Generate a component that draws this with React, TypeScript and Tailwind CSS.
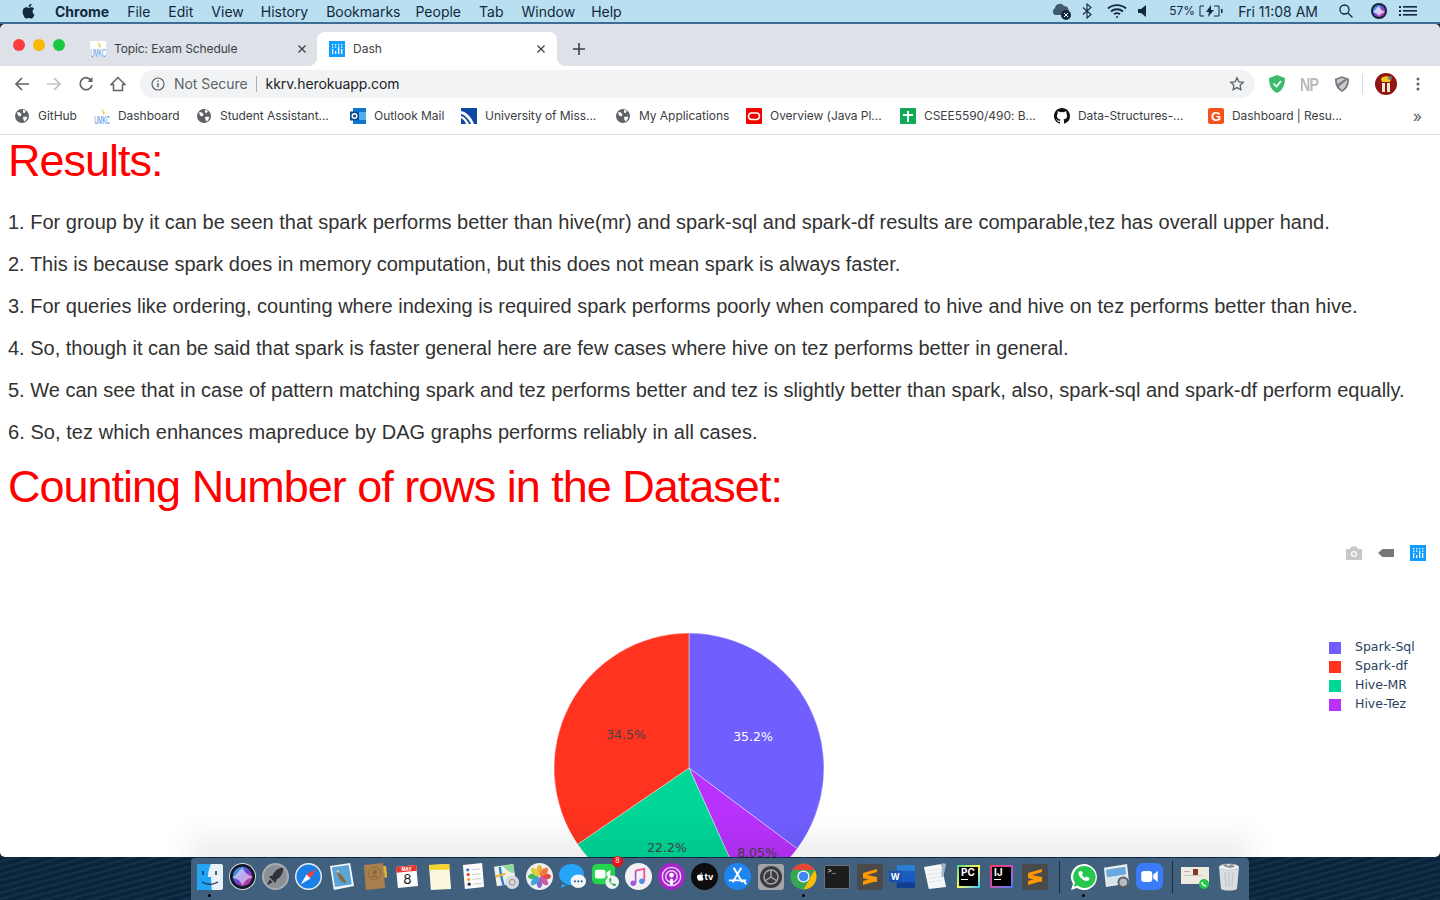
import React from "react";

const sf = "font-['Inter','Liberation_Sans',sans-serif]";

const menuItems = [
  { label: "File", left: "ml-[18px]" },
  { label: "Edit", left: "ml-[18px]" },
  { label: "View", left: "ml-[18px]" },
  { label: "History", left: "ml-[17px]" },
  { label: "Bookmarks", left: "ml-[18px]" },
  { label: "People", left: "ml-[15px]" },
  { label: "Tab", left: "ml-[18px]" },
  { label: "Window", left: "ml-[18px]" },
  { label: "Help", left: "ml-[16px]" },
];

const results = [
  { text: "1. For group by it can be seen that spark performs better than hive(mr) and spark-sql and spark-df results are comparable,tez has overall upper hand.", extra: "" },
  { text: "2. This is because spark does in memory computation, but this does not mean spark is always faster.", extra: "" },
  { text: "3. For queries like ordering, counting where indexing is required spark performs poorly when compared to hive and hive on tez performs better than hive.", extra: "" },
  { text: "4. So, though it can be said that spark is faster general here are few cases where hive on tez performs better in general.", extra: "" },
  { text: "5. We can see that in case of pattern matching spark and tez performs better and tez is slightly better than spark, also, spark-sql and spark-df perform equally.", extra: "" },
  { text: "6. So, tez which enhances mapreduce by DAG graphs performs reliably in all cases.", extra: "tracking-[0.06px]" },
];

const legend = [
  { label: "Spark-Sql", color: "bg-[#715eff]" },
  { label: "Spark-df", color: "bg-[#ff3320]" },
  { label: "Hive-MR", color: "bg-[#00d696]" },
  { label: "Hive-Tez", color: "bg-[#b832fb]" },
];

function Globe() {
  return (
    <svg viewBox="0 0 16 16" className="h-4 w-4 shrink-0">
      <circle cx="8" cy="8" r="7" fill="#5f6368" />
      <path d="M3 4l3 .5 1.500 2-1 2L4 7.500zM9 1.800l3 1-1.500 2.500L9 4.500zM9 9l3.500-.5.8 1.500L11 13.500 9.500 12z" fill="#fff" />
    </svg>
  );
}

function Umkc() {
  return (
    <svg viewBox="0 0 16 16" className="h-4 w-4 shrink-0">
      <rect width="16" height="16" fill="#fff" />
      <path d="M7.500 0l3.500 5.500-1.800 1z" fill="#f2c81e" />
      <text x="0" y="0" transform="translate(0.200 15.800) scale(0.67 1.450)" fontSize="8" fill="#3f8ade" fontFamily="'Liberation Sans', sans-serif">UMKC</text>
    </svg>
  );
}

function Github({ className = "h-4 w-4" }: { className?: string }) {
  return (
    <svg viewBox="0 0 16 16" className={`${className} shrink-0`} fill="#111">
      <path d="M8 0C3.580 0 0 3.580 0 8c0 3.540 2.290 6.530 5.470 7.590.4.070.55-.17.55-.38v-1.340c-2.230.49-2.700-1.070-2.700-1.070-.36-.93-.89-1.170-.89-1.170-.73-.5.050-.49.05-.49.8.060 1.230.83 1.230.83.710 1.220 1.870.87 2.330.66.070-.52.28-.87.510-1.070-1.780-.2-3.640-.89-3.640-3.950 0-.87.310-1.590.820-2.150-.08-.2-.36-1.020.08-2.120 0 0 .67-.21 2.200.82a7.600 7.600 0 0 1 4 0c1.530-1.040 2.200-.82 2.200-.82.44 1.100.16 1.920.08 2.120.51.560.82 1.270.82 2.150 0 3.070-1.870 3.750-3.650 3.950.29.250.54.730.54 1.480v2.200c0 .210.15.460.55.380A8.010 8.010 0 0 0 16 8c0-4.420-3.580-8-8-8z" />
    </svg>
  );
}

function Outlook() {
  return (
    <svg viewBox="0 0 16 16" className="h-4 w-4 shrink-0">
      <rect x="3" y="0" width="13" height="16" fill="#0f78d4" />
      <rect x="9" y="4" width="7" height="8" fill="#50b0ee" />
      <rect x="0" y="3.500" width="9" height="9" fill="#0a4f94" />
      <circle cx="4.500" cy="8" r="2.300" fill="none" stroke="#fff" strokeWidth="1.400" />
    </svg>
  );
}

function Mizzou() {
  return (
    <svg viewBox="0 0 16 16" className="h-4 w-4 shrink-0">
      <rect width="16" height="16" fill="#0d47a1" />
      <path d="M0 3c5 1 10 5 13 13h-3C8 11 4 7 0 6zM0 8c4 1 6 4 8 8H5C4 13 2 11 0 10z" fill="#fff" />
    </svg>
  );
}

function Oracle() {
  return (
    <svg viewBox="0 0 16 16" className="h-4 w-4 shrink-0">
      <rect width="16" height="16" rx="1" fill="#f80000" />
      <rect x="2.500" y="5" width="11" height="6.500" rx="3.200" fill="none" stroke="#fff" strokeWidth="1.500" />
    </svg>
  );
}

function Blackboard() {
  return (
    <svg viewBox="0 0 16 16" className="h-4 w-4 shrink-0">
      <rect width="16" height="16" rx="1" fill="#0fa958" />
      <path d="M7 3h2v3h4v2H9v6H7V8H3V6h4z" fill="#fff" />
    </svg>
  );
}

function Resume() {
  return (
    <svg viewBox="0 0 16 16" className="h-4 w-4 shrink-0">
      <rect width="16" height="16" rx="2" fill="#f4511e" />
      <text x="8" y="13" textAnchor="middle" fontSize="13" fontWeight="700" fill="#fff" fontFamily="'Liberation Sans', sans-serif">G</text>
    </svg>
  );
}

function PlotlyMark() {
  return (
    <svg viewBox="0 0 16 16" className="h-4 w-4 shrink-0">
      <rect width="16" height="16" fill="#119dff" />
      <g fill="#fff">
        <rect x="3" y="8" width="1.300" height="5" />
        <rect x="6" y="10" width="1.300" height="3" />
        <rect x="9" y="7" width="1.300" height="6" />
        <rect x="12" y="8" width="1.300" height="5" />
        <rect x="3" y="3" width="1.300" height="1.300" />
        <rect x="6" y="3" width="1.300" height="1.300" />
        <rect x="9" y="3" width="1.300" height="1.300" />
        <rect x="12" y="3" width="1.300" height="1.300" />
        <rect x="3" y="5.500" width="1.300" height="1.300" />
        <rect x="6" y="5.500" width="1.300" height="1.300" />
        <rect x="9" y="5.500" width="1.300" height="1.300" />
        <rect x="12" y="5.500" width="1.300" height="1.300" />
      </g>
    </svg>
  );
}

const bookmarks = [
  { icon: <Globe />, label: "GitHub", w: "w-[80px]" },
  { icon: <Umkc />, label: "Dashboard", w: "w-[102px]" },
  { icon: <Globe />, label: "Student Assistant...", w: "w-[154px]" },
  { icon: <Outlook />, label: "Outlook Mail", w: "w-[111px]" },
  { icon: <Mizzou />, label: "University of Miss...", w: "w-[154px]" },
  { icon: <Globe />, label: "My Applications", w: "w-[131px]" },
  { icon: <Oracle />, label: "Overview (Java Pl...", w: "w-[154px]" },
  { icon: <Blackboard />, label: "CSEE5590/490: B...", w: "w-[154px]" },
  { icon: <Github />, label: "Data-Structures-...", w: "w-[154px]" },
  { icon: <Resume />, label: "Dashboard | Resu...", w: "w-[154px]" },
];

function MenuBar() {
  return (
    <div className={`${sf} flex h-[22px] items-center bg-[#b9dff1] pl-[21px] pr-[23px] text-[14px] text-[#12293c]`}>
      <svg viewBox="0 0 14 16" className="h-4 w-[14px]" fill="#12293c">
        <path d="M11.600 8.500c0-1.800 1.500-2.700 1.600-2.700-.9-1.300-2.200-1.500-2.700-1.500-1.100-.1-2.200.7-2.800.7s-1.500-.7-2.400-.7c-1.300 0-2.400.7-3.100 1.900-1.300 2.300-.3 5.600 1 7.500.6.900 1.400 1.900 2.300 1.800.9 0 1.300-.6 2.400-.6s1.400.6 2.400.6 1.600-.9 2.200-1.800c.7-1 1-2 1-2.100-.1 0-1.900-.7-1.900-3.100zM9.800 3c.5-.6.800-1.400.7-2.300-.7 0-1.600.5-2.100 1.100-.5.500-.9 1.400-.8 2.200.8.100 1.700-.4 2.200-1z" />
      </svg>
      <span className="ml-[20px] font-bold">Chrome</span>
      {menuItems.map((m) => (
        <span key={m.label} className={m.left}>{m.label}</span>
      ))}
      <div className="ml-auto flex items-center">
        <svg viewBox="0 0 22 18" className="h-[18px] w-[22px]">
          <path d="M4 13a4 4 0 0 1 0-7 5 5 0 0 1 9-2 4 4 0 0 1 4 6v3z" fill="#40596b" />
          <circle cx="15" cy="13" r="5" fill="#12293c" />
          <path d="M13 11l4 4m0-4l-4 4" stroke="#fff" strokeWidth="1" />
        </svg>
        <svg viewBox="0 0 10 16" className="ml-[9px] h-4 w-[10px]" fill="none" stroke="#12293c" strokeWidth="1.100">
          <path d="M1 4.500l8 7-4 3.500V1l4 3.500-8 7" />
        </svg>
        <svg viewBox="0 0 20 16" className="ml-[15px] h-4 w-5" fill="none" stroke="#12293c" strokeWidth="1.800">
          <path d="M1 5.500c5-4.600 13-4.600 18 0M4 8.500c3.400-3 8.600-3 12 0M7 11.300c1.800-1.400 4.200-1.400 6 0" />
          <circle cx="10" cy="14" r="1" fill="#12293c" stroke="none" />
        </svg>
        <svg viewBox="0 0 10 12" className="ml-[11px] h-3 w-[10px]" fill="#12293c">
          <path d="M0 4h3l5-4v12L3 8H0z" />
        </svg>
        <span className="ml-[21px] text-[12px]">57%</span>
        <svg viewBox="0 0 24 12" className="ml-[4px] h-3 w-6">
          <path d="M5 1H1v10h4M15 1h5v10h-5" fill="none" stroke="#12293c" strokeWidth="1" />
          <path d="M12 0L7 7h3l-1 5 6-7h-3z" fill="#12293c" />
          <rect x="22" y="4" width="1.500" height="4" fill="#12293c" />
        </svg>
        <span className="ml-[15px]">Fri 11:08 AM</span>
        <svg viewBox="0 0 14 14" className="ml-[21px] h-[14px] w-[14px]" fill="none" stroke="#12293c" strokeWidth="1.300">
          <circle cx="5.500" cy="5.500" r="4.500" />
          <path d="M9 9l4.500 4.500" />
        </svg>
        <svg viewBox="0 0 16 16" className="ml-[18px] h-4 w-4">
          <defs>
            <linearGradient id="siriBar" x1="0" y1="0" x2="1" y2="1">
              <stop offset="0" stopColor="#2fc4e8" />
              <stop offset="0.5" stopColor="#7a4be0" />
              <stop offset="1" stopColor="#e0358e" />
            </linearGradient>
          </defs>
          <circle cx="8" cy="8" r="8" fill="#14233a" />
          <circle cx="8" cy="8" r="6" fill="url(#siriBar)" />
          <path d="M2 9c2-1 3-4 6-6 1 3 3 5 6 6-2 1-4 1-6 4-2-3-4-3-6-4z" fill="#fff" opacity="0.7" />
        </svg>
        <svg viewBox="0 0 18 12" className="ml-[12px] h-3 w-[18px]" fill="#12293c">
          <rect x="0" y="1" width="2" height="2" />
          <rect x="0" y="5" width="2" height="2" />
          <rect x="0" y="9" width="2" height="2" />
          <rect x="4" y="1" width="14" height="1.600" />
          <rect x="4" y="5" width="14" height="1.600" />
          <rect x="4" y="9" width="14" height="1.600" />
        </svg>
      </div>
    </div>
  );
}

const CloseX = () => (
  <svg viewBox="0 0 10 10" className="ml-auto h-[10px] w-[10px]" fill="none" stroke="#3c4043" strokeWidth="1.300">
    <path d="M1.500 1.500l7 7m0-7l-7 7" />
  </svg>
);

function TabStrip() {
  return (
    <div className={`${sf} flex h-[42px] items-end bg-[#dee1e7] text-[12px] text-[#3c4043]`}>
      <div className="flex h-[42px] items-center gap-2 pl-[13px]">
        <span className="h-3 w-3 rounded-full bg-[#fc3d40]" />
        <span className="h-3 w-3 rounded-full bg-[#fdb700]" />
        <span className="h-3 w-3 rounded-full bg-[#1ac93f]" />
      </div>
      <div className="ml-[25px] flex h-[34px] w-[227px] items-center pb-[1px] pr-[10px]">
        <Umkc />
        <span className="ml-2 tracking-[-0.1px]">Topic: Exam Schedule</span>
        <CloseX />
      </div>
      <div className="relative flex h-[34px] w-[240px] items-center rounded-t-lg bg-white pb-[1px] pl-[12px] pr-[11px]">
        <PlotlyMark />
        <span className="ml-2">Dash</span>
        <CloseX />
        <svg viewBox="0 0 8 8" className="absolute bottom-0 left-[-8px] h-2 w-2" fill="#fff">
          <path d="M8 0v8H0c4 0 8-4 8-8z" />
        </svg>
        <svg viewBox="0 0 8 8" className="absolute bottom-0 right-[-8px] h-2 w-2" fill="#fff">
          <path d="M0 0v8h8C4 8 0 4 0 0z" />
        </svg>
      </div>
      <svg viewBox="0 0 12 12" className="mb-[11px] ml-[16px] h-3 w-3" fill="none" stroke="#3c4043" strokeWidth="1.600">
        <path d="M6 0v12M0 6h12" />
      </svg>
    </div>
  );
}

function Toolbar() {
  return (
    <div className={`${sf} flex h-[32px] items-start bg-white pl-[14px]`}>
      <div className="flex h-[36px] items-center gap-4">
        <svg viewBox="0 0 16 16" className="h-4 w-4" fill="none" stroke="#5f6368" strokeWidth="1.700">
          <path d="M15 8H2M8 2L2 8l6 6" />
        </svg>
        <svg viewBox="0 0 16 16" className="h-4 w-4" fill="none" stroke="#bdc1c6" strokeWidth="1.700">
          <path d="M1 8h13M8 2l6 6-6 6" />
        </svg>
        <svg viewBox="0 0 16 16" className="h-4 w-4" fill="none" stroke="#5f6368" strokeWidth="1.700">
          <path d="M13.500 5A6 6 0 1 0 14 9" />
          <path d="M14.500 1v5h-5z" fill="#5f6368" stroke="none" />
        </svg>
        <svg viewBox="0 0 16 16" className="h-4 w-4" fill="none" stroke="#5f6368" strokeWidth="1.500">
          <path d="M8 1.500L1 8.500h2.500v6h9v-6H15z" />
        </svg>
      </div>
      <div className="ml-[14px] mt-[4px] flex h-[28px] w-[1115px] items-center rounded-full bg-[#f1f3f4] pl-[11px] pr-[10px] text-[14px]">
        <svg viewBox="0 0 14 14" className="h-[14px] w-[14px]" fill="none" stroke="#5f6368" strokeWidth="1.200">
          <circle cx="7" cy="7" r="6" />
          <path d="M7 6v4.300M7 3.500v1.300" strokeWidth="1.400" />
        </svg>
        <span className="mb-[2px] ml-[9px] tracking-[-0.05px] text-[#5f6368]">Not Secure</span>
        <span className="ml-[8px] h-4 w-px bg-[#a9acb0]" />
        <span className="mb-[2px] ml-[9px] tracking-[-0.1px] text-[#202124]">kkrv.herokuapp.com</span>
        <svg viewBox="0 0 16 16" className="ml-auto h-4 w-4" fill="none" stroke="#5f6368" strokeWidth="1.300">
          <path d="M8 1.800l1.900 4 4.400.5-3.200 3 .8 4.400L8 11.600l-3.900 2.100.8-4.400-3.200-3 4.400-.5z" />
        </svg>
      </div>
      <div className="flex h-[36px] items-center">
        <svg viewBox="0 0 16 18" className="ml-[14px] h-[18px] w-4">
          <path d="M8 0l8 3c0 7-2 12-8 15C2 15 0 10 0 3z" fill="#3dbb6c" />
          <path d="M4.500 8.500L7.500 11.500 12 6" fill="none" stroke="#fff" strokeWidth="1.600" />
        </svg>
        <span className="ml-[13px] w-[16px] scale-x-75 text-center font-['Liberation_Sans',sans-serif] text-[19px] font-bold leading-none tracking-[-1px] text-[#b7babd]">NP</span>
        <svg viewBox="0 0 16 18" className="ml-[21px] h-4 w-[14px]">
          <path d="M8 0l8 3c0 7-2 12-8 15C2 15 0 10 0 3z" fill="#75797d" />
          <path d="M8 2l6 2c0 5-2 9-6 12-4-3-6-7-6-12z" fill="#c9cbce" />
          <path d="M3 9l9-6 1.500 1.500L4 12z" fill="#75797d" />
        </svg>
        <span className="ml-[13px] h-5 w-px bg-[#d7d9dc]" />
        <svg viewBox="0 0 22 22" className="ml-[12px] h-[22px] w-[22px]">
          <circle cx="11" cy="11" r="11" fill="#8f1414" />
          <path d="M6 6c1-3 8-4 10 0l-1 3H7z" fill="#f3c81e" />
          <rect x="7" y="10" width="8" height="9" fill="#f1e6d0" />
          <rect x="10" y="10" width="2" height="9" fill="#8f1414" />
          <circle cx="15" cy="5" r="2" fill="#777" />
        </svg>
        <svg viewBox="0 0 4 14" className="ml-[19px] h-[14px] w-1" fill="#5f6368">
          <circle cx="2" cy="2" r="1.500" />
          <circle cx="2" cy="7" r="1.500" />
          <circle cx="2" cy="12" r="1.500" />
        </svg>
      </div>
    </div>
  );
}

function BookmarksBar() {
  return (
    <div className={`${sf} flex h-[37px] items-center border-b border-[#d9dadc] bg-white pb-[1px] pl-[14px] pr-[18px] text-[12px] text-[#3c4043]`}>
      {bookmarks.map((b, i) => (
        <div key={i} className={`flex items-center gap-2 whitespace-nowrap ${b.w}`}>
          {b.icon}
          <span className="tracking-[-0.05px]">{b.label}</span>
        </div>
      ))}
      <span className="ml-auto text-[16px] leading-none text-[#5f6368]">»</span>
    </div>
  );
}

// polar -> cartesian, starts at 12 o'clock and goes clockwise
function slice(startPct: number, endPct: number) {
  const r = 135;
  const a0 = (startPct / 100) * 2 * Math.PI;
  const a1 = (endPct / 100) * 2 * Math.PI;
  const x0 = r * Math.sin(a0);
  const y0 = -r * Math.cos(a0);
  const x1 = r * Math.sin(a1);
  const y1 = -r * Math.cos(a1);
  const large = endPct - startPct > 50 ? 1 : 0;
  return `M0 0L${x0} ${y0}A${r} ${r} 0 ${large} 1 ${x1} ${y1}Z`;
}

function PieChart() {
  return (
    <svg viewBox="0 0 290 290" className="absolute left-[544px] top-[108px] h-[290px] w-[290px]">
      <g transform="translate(145 145)" stroke="#fff" strokeWidth="0.4">
        <path d={slice(0, 35.2)} fill="#715eff" />
        <path d={slice(35.2, 43.25)} fill="#b832fb" />
        <path d={slice(43.25, 65.45)} fill="#00d696" />
        <path d={slice(65.45, 100)} fill="#ff3320" />
      </g>
      <g fontFamily="'DejaVu Sans', sans-serif" fontSize="12.500" textAnchor="middle">
        <text x="209" y="118" fill="#fff">35.2%</text>
        <text x="82" y="116" fill="#444">34.5%</text>
        <text x="123" y="229" fill="#444">22.2%</text>
        <text x="213" y="234" fill="#444">8.05%</text>
      </g>
    </svg>
  );
}

function Chart() {
  return (
    <div className="relative h-[450px]">
      <div className="absolute right-[14px] top-[30px] flex items-center gap-4">
        <svg viewBox="0 0 16 14" className="h-[14px] w-4" fill="#c8c8c8">
          <path d="M0 3h4l1.500-2.500h5L12 3h4v11H0z" />
          <circle cx="8" cy="8" r="3" fill="#fff" />
          <circle cx="8" cy="8" r="1.800" />
        </svg>
        <svg viewBox="0 0 16 10" className="h-[10px] w-4" fill="#777">
          <path d="M4.500 1H16v8H4.500L0 5z" />
        </svg>
        <PlotlyMark />
      </div>
      <PieChart />
      <div className="absolute left-[1329px] top-[123px] font-['DejaVu_Sans',sans-serif] text-[12.5px] text-[#2a3f5f]">
        {legend.map((l) => (
          <div key={l.label} className="flex h-[19px] items-center">
            <span className={`h-3 w-3 ${l.color}`} />
            <span className="ml-[14px] whitespace-nowrap">{l.label}</span>
          </div>
        ))}
      </div>
    </div>
  );
}

function DashPage() {
  return (
    <div className="relative min-h-0 flex-1 overflow-hidden bg-white font-['Liberation_Sans',sans-serif]">
      <div className="px-2">
        <h1 className="mt-[-3px] text-[45px] leading-[57.6px] tracking-[-1px] text-[#ff0000]">Results:</h1>
      </div>
      <div className="mt-[21px] px-2 text-[20px] leading-[23px] text-[#323232]">
        {results.map((line) => (
          <p key={line.text} className={`mb-[19px] whitespace-nowrap ${line.extra}`}>{line.text}</p>
        ))}
      </div>
      <div className="px-2">
        <h1 className="mt-[-5px] text-[45px] leading-[57.6px] tracking-[-1px] text-[#ff0000]">Counting Number of rows in the Dataset:</h1>
      </div>
      <Chart />
      <div className="pointer-events-none absolute bottom-[-20px] left-[190px] h-[40px] w-[1060px] bg-black/[0.07] blur-[14px]" />
    </div>
  );
}

function Tile({ children }: { children?: React.ReactNode }) {
  return <div className="relative flex h-[33px] w-[33px] shrink-0 items-center justify-center">{children}</div>;
}

const DockDot = () => <span className="absolute bottom-[-4px] left-[15px] h-[3px] w-[3px] rounded-full bg-black" />;

function Dock() {
  return (
    <div className="relative flex h-[43px] shrink-0 items-start justify-center">
      <div className={`${sf} mt-[1px] flex h-[42px] w-[1058px] items-center rounded-t-[4px] bg-[#40607d] pb-[5px] pl-[2px] text-white`}>
        <Tile>
          <svg viewBox="0 0 26 26" className="h-[26px] w-[26px]">
            <rect width="26" height="26" rx="2" fill="#e9f1f8" />
            <path d="M2 0h12c-2 4-3 9-3 13h3c0 5 .5 9 1 13H2a2 2 0 0 1-2-2V2a2 2 0 0 1 2-2z" fill="#23a5f5" />
            <path d="M6 7v4M19 7v4" stroke="#14314e" strokeWidth="1.500" />
            <path d="M5 18c5 3 11 3 16 0" fill="none" stroke="#14314e" strokeWidth="1.200" />
          </svg>
          <DockDot />
        </Tile>
        <Tile>
          <svg viewBox="0 0 28 28" className="h-[27px] w-[27px]">
            <defs>
              <linearGradient id="siri" x1="0" y1="0" x2="1" y2="1">
                <stop offset="0" stopColor="#29c6e8" />
                <stop offset="0.5" stopColor="#6a3fd8" />
                <stop offset="1" stopColor="#ea3a84" />
              </linearGradient>
            </defs>
            <circle cx="14" cy="14" r="14" fill="#d8d8de" />
            <circle cx="14" cy="14" r="13" fill="#121a2a" />
            <circle cx="14" cy="14" r="10" fill="url(#siri)" />
            <path d="M3 15c4-1 7-7 11-10 1 4 6 8 11 10-5 1-8 2-11 8-3-6-7-7-11-8z" fill="#fff" opacity="0.55" />
          </svg>
        </Tile>
        <Tile>
          <svg viewBox="0 0 28 28" className="h-[27px] w-[27px]">
            <circle cx="14" cy="14" r="14" fill="#a8adb2" />
            <circle cx="14" cy="14" r="12" fill="#8b9096" />
            <path d="M22 5c-5 0-9 3-11 8l-4 1 2 2 3 3 2 2 1-4c5-2 7-7 7-12z" fill="#2f3236" />
            <path d="M8 17l-3 6 6-3z" fill="#2f3236" />
          </svg>
        </Tile>
        <Tile>
          <svg viewBox="0 0 28 28" className="h-[27px] w-[27px]">
            <circle cx="14" cy="14" r="14" fill="#e9edf2" />
            <circle cx="14" cy="14" r="12.500" fill="#1b7fe8" />
            <path d="M22 6l-10 6 4 4z" fill="#ff3b30" />
            <path d="M6 22l10-6-4-4z" fill="#fff" />
          </svg>
        </Tile>
        <Tile>
          <svg viewBox="0 0 26 28" className="h-[27px] w-[25px]">
            <path d="M1 3l21-3 4 24-21 4z" fill="#f5f7f9" />
            <path d="M3 4.500l17.500-2.500 3.200 20-17.500 3z" fill="#5ba4d8" />
            <path d="M8 9c3 1 5 3 7 6l3 5-2 1-4-3-2-3z" fill="#8a6a3c" />
            <path d="M7 9l3-2 1 3z" fill="#d9c49a" />
          </svg>
        </Tile>
        <Tile>
          <svg viewBox="0 0 26 28" className="h-[27px] w-[25px]">
            <path d="M2 2l20-2 2 26-20 2z" fill="#a9804d" />
            <path d="M22 3l3 0 .5 6-3 .2zM23 9l3 0 .3 6-3 .2z" fill="#e2b23a" />
            <circle cx="13" cy="11" r="6.500" fill="none" stroke="#8d6a3c" strokeWidth="1" />
            <circle cx="13" cy="9.500" r="2.300" fill="#8d6a3c" />
            <path d="M9 15c1-3 7-3 8 0z" fill="#8d6a3c" />
          </svg>
        </Tile>
        <Tile>
          <svg viewBox="0 0 26 28" className="h-[27px] w-[25px]">
            <path d="M1 4l21-2 2 22-21 2z" fill="#fdfdfd" />
            <path d="M1 4l21-2 .6 6-21 2z" fill="#e8352e" />
            <text x="12" y="8" textAnchor="middle" fontSize="4.500" fontWeight="700" fill="#fff" fontFamily="Inter, sans-serif">MAY</text>
            <text x="13" y="22" textAnchor="middle" fontSize="14" fill="#222" fontFamily="Inter, sans-serif">8</text>
          </svg>
        </Tile>
        <Tile>
          <svg viewBox="0 0 26 28" className="h-[27px] w-[25px]">
            <path d="M1 2l21-1 2 26-21 1z" fill="#fbf7dd" />
            <path d="M1 2l21-1 .4 6H1.400z" fill="#f6d32d" />
          </svg>
        </Tile>
        <Tile>
          <svg viewBox="0 0 24 28" className="h-[27px] w-[23px]">
            <path d="M1 2l20-2 2 25-20 2z" fill="#fdfdfd" />
            <circle cx="6" cy="7" r="1.700" fill="#3478f6" />
            <circle cx="6.500" cy="12" r="1.700" fill="#e8352e" />
            <circle cx="7" cy="17" r="1.700" fill="#f5a623" />
            <circle cx="7.500" cy="22" r="1.700" fill="#333" />
            <path d="M10 7l9-.8M10.500 12l9-.8M11 17l9-.8M11.500 22l9-.8" stroke="#c8c8c8" strokeWidth="1" />
          </svg>
        </Tile>
        <Tile>
          <svg viewBox="0 0 28 28" className="h-[27px] w-[27px]">
            <path d="M1 4l20-3 3 20-20 3z" fill="#eef1e4" />
            <path d="M10 3l11-2 1 9c-4 1-8-3-12-7z" fill="#8fd89d" />
            <path d="M7 4c1 7 2 13 4 19" stroke="#2a7fe0" strokeWidth="2.500" fill="none" />
            <path d="M3 14l10-3" stroke="#f0b429" strokeWidth="2" />
            <circle cx="20" cy="20" r="7" fill="#d6dade" />
            <circle cx="20" cy="20" r="3" fill="none" stroke="#8a8f96" strokeWidth="1" />
          </svg>
        </Tile>
        <Tile>
          <svg viewBox="0 0 28 28" className="h-[27px] w-[27px]">
            <circle cx="14" cy="14" r="14" fill="#eeeeee" />
            <g opacity="0.9">
              <ellipse cx="14" cy="7.500" rx="3" ry="5.500" fill="#f5a623" />
              <ellipse cx="14" cy="20.500" rx="3" ry="5.500" fill="#7a5cc9" />
              <ellipse cx="7.500" cy="14" rx="5.500" ry="3" fill="#37b24d" />
              <ellipse cx="20.500" cy="14" rx="5.500" ry="3" fill="#e8352e" />
              <ellipse cx="9.400" cy="9.400" rx="5.500" ry="3" fill="#d3d02e" transform="rotate(45 9.400 9.400)" />
              <ellipse cx="18.600" cy="18.600" rx="5.500" ry="3" fill="#c84b9d" transform="rotate(45 18.600 18.600)" />
              <ellipse cx="18.600" cy="9.400" rx="5.500" ry="3" fill="#ef6c2f" transform="rotate(-45 18.600 9.400)" />
              <ellipse cx="9.400" cy="18.600" rx="5.500" ry="3" fill="#2a9fd8" transform="rotate(-45 9.400 18.600)" />
            </g>
          </svg>
        </Tile>
        <Tile>
          <svg viewBox="0 0 28 28" className="h-[27px] w-[27px]">
            <ellipse cx="13" cy="12" rx="13" ry="11" fill="#26a5f8" />
            <path d="M3 22l-1 4 6-3z" fill="#26a5f8" />
            <ellipse cx="20" cy="19" rx="8" ry="7" fill="#f4f6f8" />
            <circle cx="16.500" cy="19" r="1.100" fill="#2b5f8f" />
            <circle cx="20" cy="19" r="1.100" fill="#2b5f8f" />
            <circle cx="23.500" cy="19" r="1.100" fill="#2b5f8f" />
          </svg>
        </Tile>
        <Tile>
          <svg viewBox="0 0 28 28" className="h-[27px] w-[27px]">
            <rect x="0" y="1" width="24" height="21" rx="5" fill="#22d34b" />
            <rect x="3" y="7" width="11" height="9" rx="2" fill="#fff" />
            <path d="M15 10l4-3v9l-4-3z" fill="#fff" />
            <circle cx="21" cy="20" r="7" fill="#f4f4f4" />
            <path d="M18 16c-1 3 2 7 6 8l1-2-2.500-1-1 1c-1-.5-2-2-2.200-3l1-1-.8-2.500z" fill="#22b04b" />
          </svg>
          <span className="absolute right-[-1px] top-[-4px] flex h-[11px] w-[11px] items-center justify-center rounded-full bg-[#e8141c] text-[7px] text-white">8</span>
        </Tile>
        <Tile>
          <svg viewBox="0 0 28 28" className="h-[27px] w-[27px]">
            <circle cx="14" cy="14" r="14" fill="#f2f2f4" />
            <path d="M11 8l9-2v13" fill="none" stroke="#ef4f8b" strokeWidth="1.800" />
            <path d="M11 8v13" stroke="#a55bd8" strokeWidth="1.800" />
            <circle cx="8.500" cy="21" r="2.800" fill="#a55bd8" />
            <circle cx="17.500" cy="19" r="2.800" fill="#4c8fe8" />
          </svg>
        </Tile>
        <Tile>
          <svg viewBox="0 0 28 28" className="h-[27px] w-[27px]">
            <circle cx="14" cy="14" r="14" fill="#a726c9" />
            <circle cx="14" cy="14" r="9.500" fill="none" stroke="#f4d8fb" strokeWidth="1.400" />
            <circle cx="14" cy="14" r="6" fill="none" stroke="#f4d8fb" strokeWidth="1.400" />
            <circle cx="14" cy="12.500" r="2.500" fill="#fff" />
            <rect x="12.500" y="16" width="3" height="7" rx="1.500" fill="#fff" />
          </svg>
        </Tile>
        <Tile>
          <div className="flex h-[27px] w-[27px] items-center justify-center rounded-full bg-[#0d0d0f] text-[9px] font-bold leading-none">
            <svg viewBox="0 0 14 16" className="mr-px h-[9px] w-2" fill="#fff">
              <path d="M11.600 8.500c0-1.800 1.500-2.700 1.600-2.700-.9-1.300-2.200-1.500-2.700-1.500-1.100-.1-2.200.7-2.800.7s-1.500-.7-2.400-.7c-1.300 0-2.400.7-3.100 1.900-1.300 2.300-.3 5.600 1 7.500.6.900 1.400 1.900 2.300 1.800.9 0 1.300-.6 2.400-.6s1.400.6 2.400.6 1.600-.9 2.200-1.800c.7-1 1-2 1-2.100-.1 0-1.900-.7-1.900-3.100zM9.800 3c.5-.6.800-1.400.7-2.300-.7 0-1.600.5-2.100 1.100-.5.500-.9 1.400-.8 2.200.8.100 1.700-.4 2.200-1z" />
            </svg>
            tv
          </div>
        </Tile>
        <Tile>
          <svg viewBox="0 0 28 28" className="h-[27px] w-[27px]">
            <circle cx="14" cy="14" r="14" fill="#1d84f2" />
            <path d="M10 5l9 15M18 5l-9 15M5 18h18M20 18l3 4" fill="none" stroke="#fff" strokeWidth="2" />
          </svg>
        </Tile>
        <Tile>
          <svg viewBox="0 0 26 26" className="h-[26px] w-[26px]">
            <rect width="26" height="26" rx="3" fill="#a3a5a8" />
            <circle cx="13" cy="13" r="11" fill="#3a3b3d" />
            <circle cx="13" cy="13" r="7" fill="none" stroke="#a3a5a8" strokeWidth="1.500" />
            <path d="M13 6v7l6 4M13 13l-6 4" stroke="#a3a5a8" strokeWidth="1.500" fill="none" />
          </svg>
        </Tile>
        <Tile>
          <svg viewBox="0 0 28 28" className="h-[27px] w-[27px]">
            <circle cx="14" cy="14" r="13.500" fill="#34a853" />
            <path d="M14 .5A13.500 13.500 0 0 1 25.700 7.300H14z" fill="#ea4335" />
            <path d="M2.300 7.300A13.500 13.500 0 0 1 14 .5V7.300z" fill="#ea4335" />
            <path d="M25.700 7.300A13.500 13.500 0 0 1 14 27.500l6-10.500z" fill="#fbbc05" />
            <circle cx="14" cy="14" r="6.300" fill="#fff" />
            <circle cx="14" cy="14" r="5" fill="#4285f4" />
          </svg>
          <DockDot />
        </Tile>
        <Tile>
          <div className="flex h-[24px] w-[26px] rounded-[2px] border border-[#6d7175] bg-[#1d1d1d] pl-[3px] pt-[1px] font-['Liberation_Mono',monospace] text-[7px] leading-[9px]">
            &gt;_
          </div>
        </Tile>
        <Tile>
          <svg viewBox="0 0 26 26" className="h-[26px] w-[26px]">
            <rect width="26" height="26" rx="2" fill="#4a4a4a" />
            <path d="M20 5L6 9v5l14 4v-5L10 11l10-3zM6 21l14-4v-4L6 17z" fill="#ff9800" />
          </svg>
        </Tile>
        <Tile>
          <svg viewBox="0 0 28 26" className="h-[25px] w-[27px]">
            <rect x="8" y="1" width="19" height="24" rx="1" fill="#1d5fbf" />
            <rect x="8" y="1" width="19" height="6" fill="#2b7cd3" />
            <rect x="8" y="13" width="19" height="6" fill="#185abd" />
            <rect x="8" y="19" width="19" height="6" fill="#103f91" />
            <rect x="0" y="7" width="13" height="12" rx="1" fill="#1a4fae" />
            <text x="6.500" y="16.500" textAnchor="middle" fontSize="9" fontWeight="700" fill="#fff" fontFamily="Inter, sans-serif">W</text>
          </svg>
        </Tile>
        <Tile>
          <svg viewBox="0 0 26 28" className="h-[27px] w-[25px]">
            <path d="M1 4l18-3 5 24-18 2z" fill="#f5f6f7" />
            <path d="M20 0l4 1-3 14-2-1z" fill="#9fb6c9" />
            <path d="M4 8l14-2M5 12l14-2M5.500 16l14-2M6 20l14-2" stroke="#dcdfe3" strokeWidth="0.800" />
          </svg>
        </Tile>
        <Tile>
          <div className="flex h-[23px] w-[23px] flex-col bg-gradient-to-br from-[#21d789] via-[#fcf84a] to-[#07c3f2] p-[2px]">
            <div className="flex h-full flex-col bg-black pl-[2px] text-[10px] font-bold leading-[11px]">
              PC
              <span className="mt-px h-px w-[7px] bg-white" />
            </div>
          </div>
        </Tile>
        <Tile>
          <div className="flex h-[23px] w-[23px] flex-col bg-gradient-to-br from-[#fe315d] via-[#c74cb3] to-[#087cfa] p-[2px]">
            <div className="flex h-full flex-col bg-black pl-[2px] text-[10px] font-bold leading-[11px]">
              IJ
              <span className="mt-px h-px w-[7px] bg-white" />
            </div>
          </div>
        </Tile>
        <Tile>
          <svg viewBox="0 0 26 26" className="h-[26px] w-[26px]">
            <rect width="26" height="26" rx="2" fill="#4a4a4a" />
            <path d="M20 5L6 9v5l14 4v-5L10 11l10-3zM6 21l14-4v-4L6 17z" fill="#ff9800" />
          </svg>
        </Tile>
        <span className="mx-[7.500px] h-[32px] w-px shrink-0 bg-[#1c2c3b]" />
        <Tile>
          <svg viewBox="0 0 28 28" className="h-[28px] w-[28px]">
            <path d="M14 1A13 13 0 0 0 3 21l-2 6 6-2A13 13 0 1 0 14 1z" fill="#fff" />
            <path d="M14 3A11 11 0 0 0 5 20l-1.200 3.800L7.800 22.600A11 11 0 1 0 14 3z" fill="#25c84d" />
            <path d="M10 8c-2 1-2 4 1 7s6 4 8 2l.5-2-3-1.500-1.300 1.300c-1-.4-3-2.300-3.300-3.400l1.200-1.200L11.500 8z" fill="#fff" />
          </svg>
          <DockDot />
        </Tile>
        <Tile>
          <svg viewBox="0 0 28 28" className="h-[27px] w-[27px]">
            <path d="M1 5l24-4 2 20-24 4z" fill="#e9edf0" />
            <path d="M3 7l20-3 1 8-20 3z" fill="#6aa7dc" />
            <path d="M4 15l20-3 1 7-20 4z" fill="#d7e3ea" />
            <circle cx="21" cy="20" r="6" fill="#5a5d61" />
            <circle cx="21" cy="20" r="4" fill="#b8bdc2" />
          </svg>
        </Tile>
        <Tile>
          <div className="flex h-[27px] w-[27px] items-center justify-center rounded-[7px] bg-[#3a7cf7]">
            <svg viewBox="0 0 18 12" className="h-[11px] w-[17px]" fill="#fff">
              <rect x="0" y="0" width="12" height="12" rx="3" />
              <path d="M13 4l5-4v12l-5-4z" />
            </svg>
          </div>
        </Tile>
        <span className="mx-[6px] h-[32px] w-px shrink-0 bg-[#1c2c3b]" />
        <Tile>
          <svg viewBox="0 0 30 26" className="h-[26px] w-[30px]">
            <rect x="0" y="3" width="28" height="17" fill="#eeeae0" />
            <rect x="12" y="5" width="5" height="6" fill="#8a3a2c" />
            <rect x="3" y="7" width="6" height="1" fill="#b9b5aa" />
            <rect x="3" y="11" width="18" height="1" fill="#c9c5ba" />
            <circle cx="23" cy="20" r="5" fill="#25c84d" />
            <path d="M21 18c0 2 2 4 4 4" stroke="#fff" strokeWidth="1.500" fill="none" />
          </svg>
        </Tile>
        <Tile>
          <svg viewBox="0 0 24 28" className="h-[28px] w-[24px]">
            <path d="M2 4l2 22c3 2 13 2 16 0l2-22z" fill="#d9dde1" />
            <ellipse cx="12" cy="4" rx="10" ry="3" fill="#f1f3f5" stroke="#b9bdc2" strokeWidth="0.600" />
            <path d="M6 3l3-2 2 2 4-2 3 3-6 1z" fill="#8c8f94" />
            <path d="M8 9l1 15M12 9v15M16 9l-1 15" stroke="#b5b9be" strokeWidth="0.700" />
          </svg>
        </Tile>
      </div>
    </div>
  );
}

export default function App() {
  return (
    <div className="flex h-[900px] w-[1440px] flex-col overflow-hidden bg-[#0f2a40] bg-[repeating-linear-gradient(165deg,#0c2439_0px,#0c2439_3px,#12344e_4px,#0d2a42_6px)]">
      <MenuBar />
      <div className="h-[2px] shrink-0 bg-[#3d6d92]" />
      <div className="flex min-h-0 flex-1 flex-col overflow-hidden rounded-[5px]">
        <TabStrip />
        <Toolbar />
        <BookmarksBar />
        <DashPage />
      </div>
      <Dock />
    </div>
  );
}
